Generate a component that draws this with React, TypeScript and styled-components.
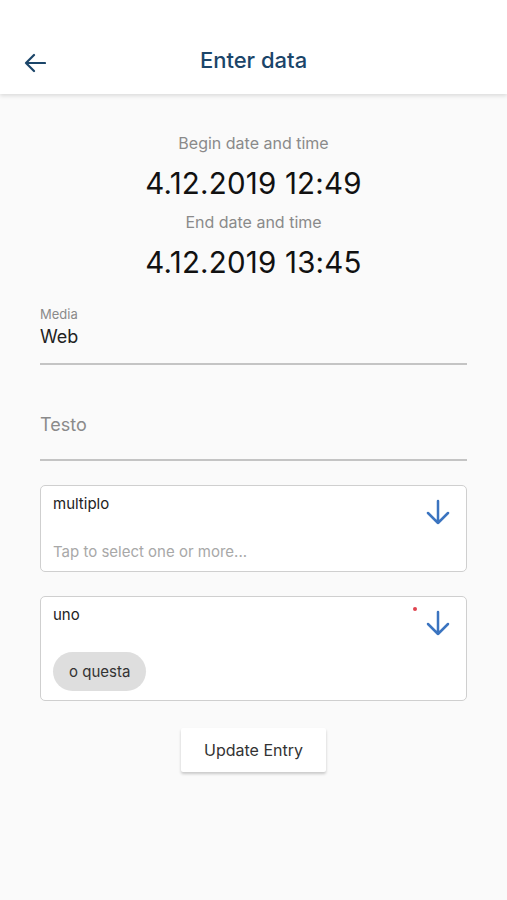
import React from "react";
import styled, { createGlobalStyle } from "styled-components";

const GlobalStyle = createGlobalStyle`
  html, body {
    margin: 0;
    padding: 0;
    background: #fafafa;
    font-family: Inter, "Liberation Sans", sans-serif;
  }
`;

const Screen = styled.div`
  width: 507px;
  min-height: 900px;
  background: #fafafa;
`;

const Header = styled.header`
  height: 94px;
  background: #fff;
  box-shadow: 0 2px 4px rgba(0, 0, 0, 0.12);
  display: grid;
  grid-template-columns: 72px 1fr 72px;
  align-items: end;
  padding-bottom: 21px;
  box-sizing: border-box;
`;

const BackBtn = styled.button`
  background: none;
  border: none;
  padding: 0 0 0 24px;
  display: flex;
  align-items: center;
  color: #1b4569;
  cursor: pointer;
`;

const Title = styled.h1`
  margin: 0;
  text-align: center;
  font-size: 22px;
  font-weight: 500;
  color: #1b4569;
`;

const Body = styled.main`
  padding: 38px 40px 0;
  display: flex;
  flex-direction: column;
`;

const DateBlock = styled.div`
  display: flex;
  flex-direction: column;
  align-items: center;
`;

const DateLabel = styled.div`
  font-size: 16px;
  color: #8a8a8a;
  line-height: 22px;
`;

const DateValue = styled.div`
  font-size: 29.5px;
  color: #111;
  line-height: 36px;
  margin: 11px 0 10px;
  letter-spacing: 0.2px;
`;

const Field = styled.div<{ $mt: number }>`
  margin-top: ${({ $mt }) => $mt}px;
  border-bottom: 2px solid #c4c4c4;
  display: flex;
  flex-direction: column;
`;

const FieldLabel = styled.div`
  font-size: 13px;
  color: #8a8a8a;
  line-height: 16px;
  margin-bottom: 3px;
`;

const FieldValue = styled.div<{ $muted?: boolean; $pb: number }>`
  font-size: 18px;
  line-height: 24px;
  color: ${({ $muted }) => ($muted ? "#8a8a8a" : "#222")};
  padding-bottom: ${({ $pb }) => $pb}px;
`;

const SelectBox = styled.div<{ $mt: number; $h: number }>`
  margin-top: ${({ $mt }) => $mt}px;
  height: ${({ $h }) => $h}px;
  box-sizing: border-box;
  background: #fff;
  border: 1.5px solid #cfcfcf;
  border-radius: 5px;
  padding: 8px 16px 9px 12px;
  display: grid;
  grid-template-columns: 1fr auto;
  grid-template-rows: auto 1fr;
`;

const SelectTitle = styled.div`
  grid-column: 1;
  grid-row: 1;
  font-size: 15px;
  color: #222;
  line-height: 20px;
`;

const ArrowWrap = styled.div`
  position: relative;
  grid-column: 2;
  grid-row: 1 / span 2;
  padding-top: 5px;
  color: #3b74c0;
`;

const RedDot = styled.span`
  position: absolute;
  left: -13px;
  top: 2px;
  width: 4px;
  height: 4px;
  border-radius: 50%;
  background: #e0434f;
`;

const Placeholder = styled.div`
  grid-column: 1;
  grid-row: 2;
  align-self: end;
  font-size: 15px;
  color: #a8a8a8;
  line-height: 20px;
`;

const Chips = styled.div`
  grid-column: 1;
  grid-row: 2;
  align-self: end;
  display: flex;
  gap: 8px;
`;

const Chip = styled.span`
  background: #dedede;
  border-radius: 20px;
  padding: 9px 16px;
  font-size: 15px;
  color: #333;
  line-height: 21px;
`;

const Actions = styled.div`
  display: flex;
  justify-content: center;
  margin-top: 27px;
`;

const UpdateBtn = styled.button`
  background: #fff;
  border: none;
  border-radius: 2px;
  box-shadow: 0 2px 3px rgba(0, 0, 0, 0.2);
  height: 44px;
  padding: 0 23px;
  font-family: inherit;
  font-size: 16px;
  color: #333;
  cursor: pointer;
`;

const DownArrow = () => (
  <svg width={24} height={26} viewBox="0 0 24 26" fill="none" stroke="currentColor" strokeWidth={2.5} strokeLinecap="round" strokeLinejoin="round">
    <path d="M12 2v22M2 14l10 10 10-10" />
  </svg>
);

export default function App() {
  return (
    <Screen>
      <GlobalStyle />
      <Header>
        <BackBtn aria-label="back">
          <svg width={22} height={20} viewBox="0 0 22 20" fill="none" stroke="currentColor" strokeWidth={2.2} strokeLinecap="round" strokeLinejoin="round">
            <path d="M21 10H2M10 2l-8 8 8 8" />
          </svg>
        </BackBtn>
        <Title>Enter data</Title>
        <div />
      </Header>
      <Body>
        <DateBlock>
          <DateLabel>Begin date and time</DateLabel>
          <DateValue>4.12.2019 12:49</DateValue>
          <DateLabel>End date and time</DateLabel>
          <DateValue>4.12.2019 13:45</DateValue>
        </DateBlock>

        <Field $mt={16}>
          <FieldLabel>Media</FieldLabel>
          <FieldValue $pb={14}>Web</FieldValue>
        </Field>

        <Field $mt={48}>
          <FieldValue $muted $pb={22}>Testo</FieldValue>
        </Field>

        <SelectBox $mt={24} $h={87}>
          <SelectTitle>multiplo</SelectTitle>
          <ArrowWrap>
            <DownArrow />
          </ArrowWrap>
          <Placeholder>Tap to select one or more...</Placeholder>
        </SelectBox>

        <SelectBox $mt={24} $h={105}>
          <SelectTitle>uno</SelectTitle>
          <ArrowWrap>
            <RedDot />
            <DownArrow />
          </ArrowWrap>
          <Chips>
            <Chip>o questa</Chip>
          </Chips>
        </SelectBox>

        <Actions>
          <UpdateBtn>Update Entry</UpdateBtn>
        </Actions>
      </Body>
    </Screen>
  );
}
